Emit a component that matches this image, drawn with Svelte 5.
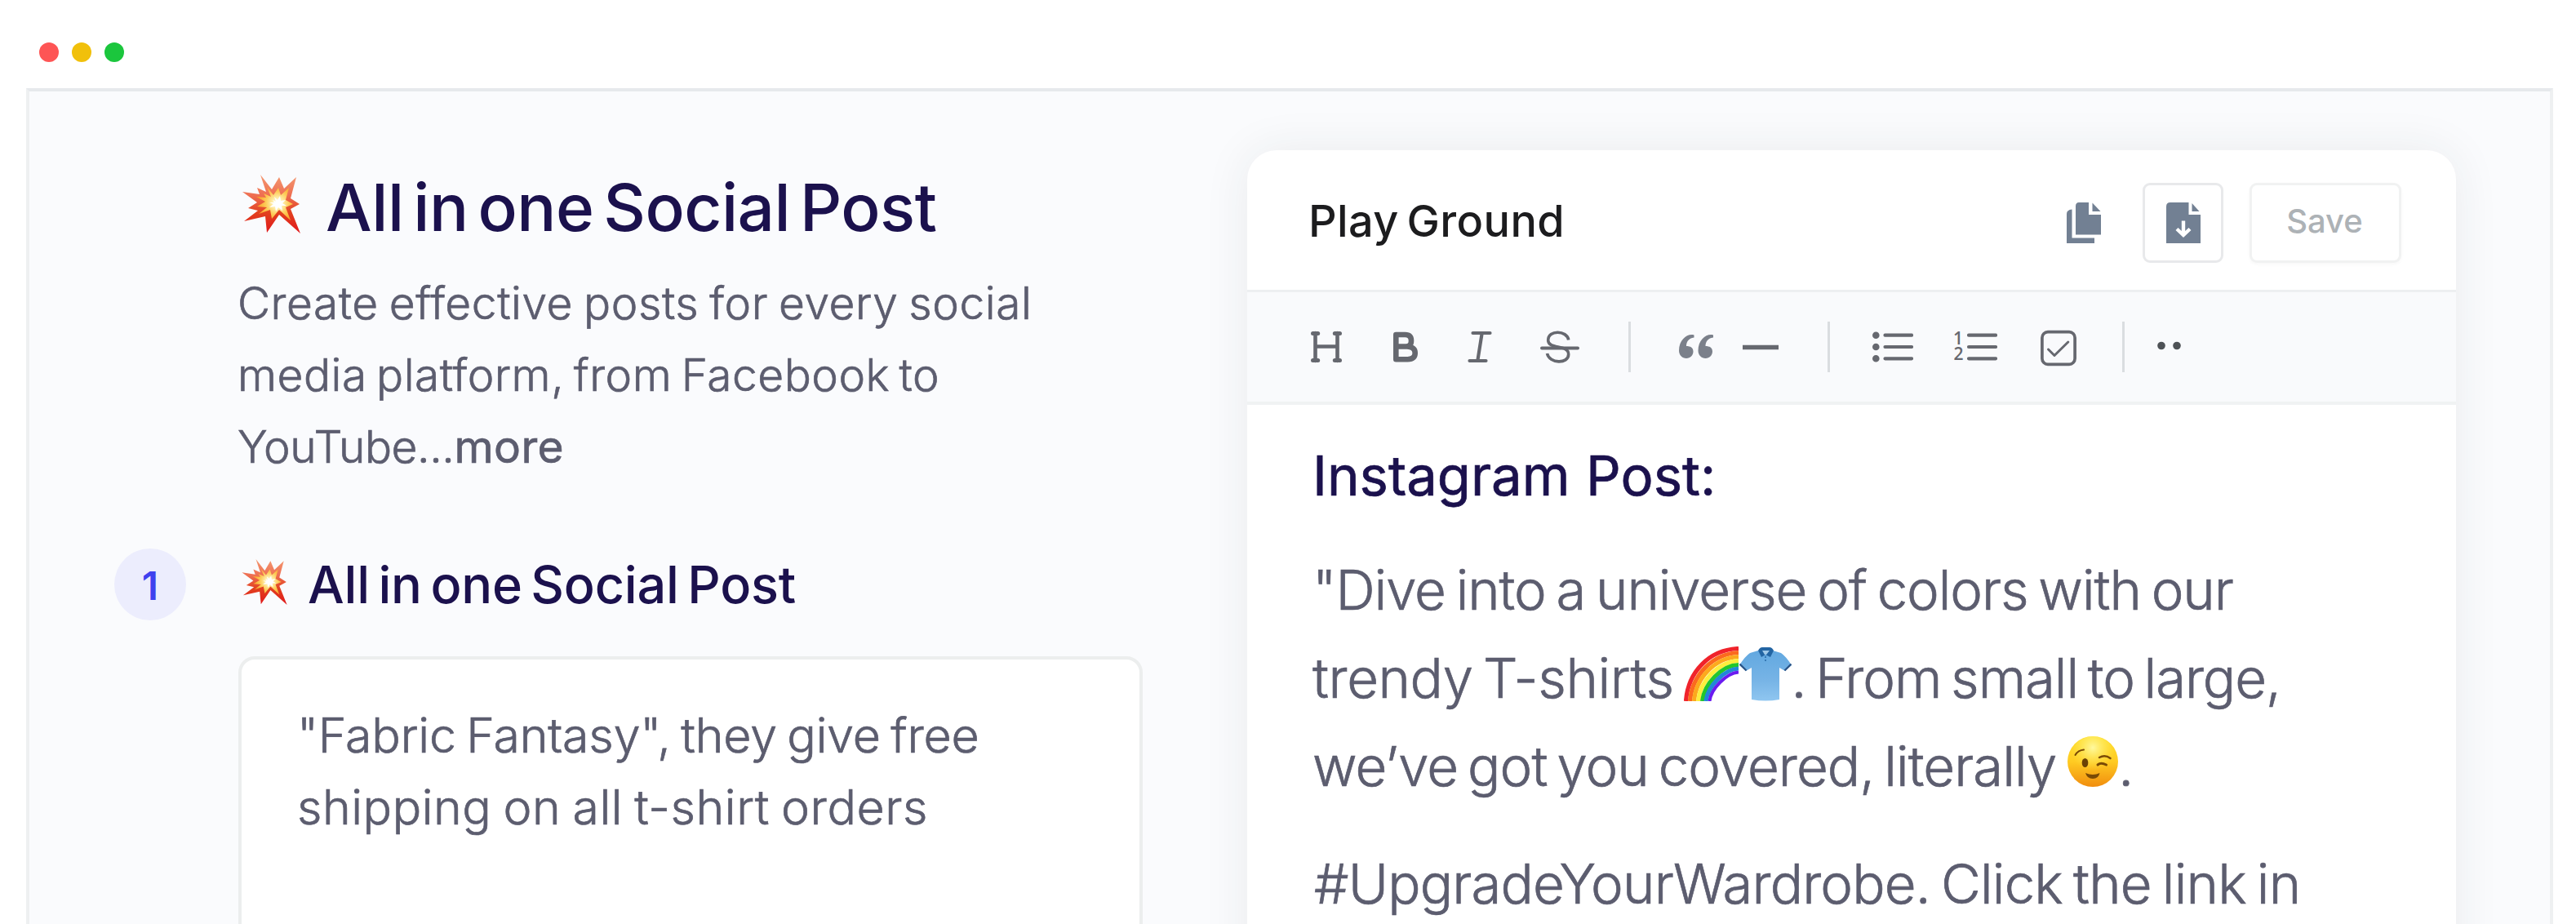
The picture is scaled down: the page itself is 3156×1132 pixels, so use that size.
<script lang="ts">
	// ls and ws are letter and word spacing in px
	type Line = { text: string; ls: number; ws: number };

	const summary: Line[] = [
		{ text: 'Create effective posts for every social', ls: 0.57, ws: -3 },
		{ text: 'media platform, from Facebook to', ls: 0.52, ws: -4.5 },
		{ text: 'YouTube...', ls: -0.4, ws: 0 }
	];

	const prompt: Line[] = [
		{ text: '"Fabric Fantasy", they give free', ls: -0.15, ws: -4 },
		{ text: 'shipping on all t-shirt orders', ls: 0.55, ws: -3 }
	];

	// gap is the space before the tool, w its drawn width
	const tools = [
		{ name: 'heading', w: 38, gap: 0 },
		{ name: 'bold', w: 30, gap: 63 },
		{ name: 'italic', w: 30, gap: 61 },
		{ name: 'strike', w: 48, gap: 59 },
		{ name: 'divider', w: 3, gap: 60 },
		{ name: 'quote', w: 42, gap: 59 },
		{ name: 'rule', w: 44, gap: 36 },
		{ name: 'divider', w: 3, gap: 60 },
		{ name: 'bullets', w: 50, gap: 52 },
		{ name: 'numbers', w: 53, gap: 50 },
		{ name: 'check', w: 44, gap: 53 },
		{ name: 'divider', w: 3, gap: 56 },
		{ name: 'more', w: 30, gap: 40 }
	];
</script>

{#snippet boom()}
	<svg class="boom" viewBox="0 0 71 72">
		<defs>
			<linearGradient id="boom-red" x1="0" y1="0" x2="0" y2="1">
				<stop offset="0" stop-color="#f49a72" />
				<stop offset="0.35" stop-color="#ee6f52" />
				<stop offset="0.65" stop-color="#e2401f" />
				<stop offset="1" stop-color="#e0161b" />
			</linearGradient>
			<radialGradient id="boom-glow" cx="43" cy="35" r="24" gradientUnits="userSpaceOnUse">
				<stop offset="0" stop-color="#fff" />
				<stop offset="0.25" stop-color="#fff0b0" />
				<stop offset="0.6" stop-color="#fdcb58" />
				<stop offset="1" stop-color="#f9a52c" />
			</radialGradient>
		</defs>
		<path
			fill="url(#boom-red)"
			d="M22 0 36 18 45 3 51 17 66 3 59 29 70 36 59 42 71 72 45 49 30 71 28 51 2 57 19 44 7 41 18 34 0 21 21 24 18 16 29 21Z"
		/>
		<path
			fill="url(#boom-glow)"
			d="M30 15 38 25 44 16 47 25 57 16 53 31 62 36 53 40 59 56 45 43 36 54 34 43 20 48 30 40 18 39 28 33 17 27 29 28 26 23 35 27Z"
		/>
		<path
			fill="#fff"
			d="M39 27 43 31 46 26 47 32 53 31 49 35 54 38 48 38 49 44 44 40 41 45 40 39 33 40 38 36 33 34 39 34 37 31 41 33Z"
		/>
	</svg>
{/snippet}

{#snippet row(line: Line)}
	<span class="line" style="letter-spacing: {line.ls}px; word-spacing: {line.ws}px">{line.text}</span>
{/snippet}

<div class="window">
	<div class="titlebar">
		<span class="dot red"></span>
		<span class="dot amber"></span>
		<span class="dot green"></span>
	</div>

	<main class="panel">
		<section class="form">
			<header class="intro">
				<h1>{@render boom()}<span>All in one Social Post</span></h1>
				<div class="summary">
					{#each summary as line}
						{@render row(line)}
					{/each}
					<b>more</b>
				</div>
			</header>

			<div class="step">
				<span class="badge">1</span>
				<h2>{@render boom()}<span>All in one Social Post</span></h2>
			</div>

			<div class="prompt">
				{#each prompt as line}
					{@render row(line)}
				{/each}
			</div>
		</section>

		<section class="card">
			<header class="card-head">
				<h3>Play Ground</h3>
				<svg class="copy" viewBox="0 0 42 50" fill="#728093">
					<path d="M15 0H27V15H42V39.500H11V4.500Q11 0 15 0Z" />
					<path d="M31.500 0.500 41.500 11H31.500Z" />
					<path d="M6.500 8.500V43.500H34V50H0V14Q0 9 6.500 8.500Z" />
				</svg>
				<button class="download" aria-label="Download">
					<svg viewBox="0 0 42 50">
						<path fill="#728093" d="M5 0H27.500V15H42V50H0V5Q0 0 5 0Z" />
						<path fill="#728093" d="M31.500 1 40.500 11H31.500Z" />
						<path
							fill="none"
							stroke="#fff"
							stroke-width="4.400"
							d="M21 22.500V39M13 32.500 21 40 29 32.500"
						/>
					</svg>
				</button>
				<button class="save">Save</button>
			</header>

			<div class="toolbar">
				{#each tools as tool}
					<span class="tool" style="width: {tool.w}px; margin-left: {tool.gap}px">
						{#if tool.name === 'divider'}
							<i class="divider"></i>
						{:else}
							<svg width={tool.w} height="50" viewBox="0 0 {tool.w} 50">
								{#if tool.name === 'heading'}
									<path d="M5.500 8V42M32.500 8V42M5.500 24.500H32.500" stroke-width="4.600" />
									<path d="M2.500 8.500H8.700M29.300 8.500H35.500M2.500 41.500H8.700M29.300 41.500H35.500" stroke-width="5" />
								{:else if tool.name === 'bold'}
									<path
										d="M3.300 10H14.500Q22 10 22 17.500T14.500 24.500H3.300M14.500 24.500H17Q26.700 25 26.700 32.500T17.500 40.200H3.300V10"
										stroke-width="6.600"
									/>
								{:else if tool.name === 'italic'}
									<path d="M6.500 8H27.500M2.500 42H22.500M17.700 8 12.300 42" stroke-width="4.200" />
								{:else if tool.name === 'strike'}
									<path d="M2 26.500H46" stroke-width="4" />
									<path
										stroke-linecap="butt"
										d="M34.700 16.500C33 4.500 9.500 3.500 9.700 17C9.800 28.500 34.700 21.500 34.700 34C34.700 46.500 11 45.500 8.500 33"
										stroke-width="3.600"
									/>
								{:else if tool.name === 'quote'}
									<path
										class="solid"
										d="M18.500 10.500C11 8 0 15.500 0 29.500C0 35 4 39 9 39S17.500 35 17.500 30.500S14 24 9 24C9 19 11.500 14.500 18.500 13.500Z"
									/>
									<path
										class="solid"
										d="M42 10.500C34.500 8 23.500 15.500 23.500 29.500C23.500 35 27.500 39 32.500 39S41 35 41 30.500S37.500 24 32.500 24C32.500 19 35 14.500 42 13.500Z"
									/>
								{:else if tool.name === 'rule'}
									<path d="M0 25.500H44" stroke-width="5.500" stroke-linecap="butt" />
								{:else if tool.name === 'bullets'}
									<path d="M15.500 10.700H48M15.500 25H48M15.500 39.300H48" stroke-width="4.200" />
									<path d="M4.300 10.700H4.310M4.300 25H4.310M4.300 39.300H4.310" stroke-width="8.600" />
								{:else if tool.name === 'numbers'}
									<path d="M18 10.700H51M18 25H51M18 39.300H51" stroke-width="4.200" />
									<text x="-1" y="22">1</text>
									<text x="-0.5" y="40.500">2</text>
								{:else if tool.name === 'check'}
									<rect x="1.900" y="6.700" width="40.200" height="39.600" rx="7" stroke-width="3.700" />
									<path d="M9.500 28 17 35.500 33.800 19" stroke-width="3" />
								{:else}
									<circle cx="5" cy="23.500" r="4.800" />
									<circle cx="24" cy="23.500" r="4.800" />
								{/if}
							</svg>
						{/if}
					</span>
				{/each}
			</div>

			<article class="post">
				<h4>Instagram&nbsp; Post:</h4>
				<p>
					<span class="line l1">"Dive into a universe of colors with our</span>
					<span class="line l2">
						<span class="lead">trendy T-shirts</span>
						<svg class="rainbow" viewBox="0 0 67 67" fill="none" stroke-width="5.200">
							<path stroke="#f0232b" d="M2.500 67C5 31 31 4 67 2.500" />
							<path stroke="#fb6a1e" d="M7.500 67C10 35 35 9 67 7.500" />
							<path stroke="#fca91d" d="M12.500 67C15 38 38 14 67 12.500" />
							<path stroke="#fdee3e" d="M17.500 67C20 42 42 19 67 17.500" />
							<path stroke="#23c62b" d="M22.500 67C25 46 46 23 67 22.500" />
							<path stroke="#2187d8" d="M27 67C29 49 49 28 67 27" />
							<path stroke="#6a1bf0" stroke-width="4" d="M31.500 67C33 52 52 32.500 67 31.500" />
						</svg>
						<svg class="shirt" viewBox="0 0 64 66">
							<defs>
								<linearGradient id="cloth" x1="0" y1="0" x2="0" y2="1">
									<stop offset="0" stop-color="#62a8e0" />
									<stop offset="0.6" stop-color="#77b4e6" />
									<stop offset="1" stop-color="#8fc6f0" />
								</linearGradient>
							</defs>
							<path
								fill="url(#cloth)"
								d="M23 4Q32 9 41 4L51 7Q57 11 64 22L56 29 49 25V64Q32 67 15 64V25L8 29 0 22Q7 11 13 7Z"
							/>
							<path fill="none" stroke="#2a5285" stroke-width="2.200" d="M0.500 20.500 8.500 28.500M63.500 20.500 55.500 28.500" />
							<path fill="#2365a3" d="M23 4Q25 0 28 0H37Q40 0 42 4L38 12 32 9 27 12Z" />
							<path fill="#9fc8e8" d="M28 4H37L33 9H31Z" />
							<path stroke="#2365a3" stroke-width="1.400" d="M32 11V13M32 15V17" />
						</svg>
						<span class="rest">. From small to large,</span>
					</span>
					<span class="line l3">
						<span>we’ve got you covered, literally</span>
						<svg class="wink" viewBox="0 0 62 62">
							<defs>
								<linearGradient id="face" x1="0" y1="0" x2="0" y2="1">
									<stop offset="0" stop-color="#ffdf2e" />
									<stop offset="0.5" stop-color="#ffcb22" />
									<stop offset="1" stop-color="#f18d0e" />
								</linearGradient>
								<radialGradient id="shine" cx="0.5" cy="0.25" r="0.5">
									<stop offset="0" stop-color="#fff9a0" />
									<stop offset="1" stop-color="#ffe94a" stop-opacity="0" />
								</radialGradient>
							</defs>
							<circle cx="31" cy="31" r="31" fill="url(#face)" />
							<circle cx="31" cy="28" r="28" fill="url(#shine)" />
							<ellipse cx="21.500" cy="32.500" rx="3.800" ry="5.600" fill="#6b4105" />
							<g fill="none" stroke="#7a4a06" stroke-linecap="round">
								<path stroke-width="2" d="M9.500 23Q13 17 20 16.500" />
								<path stroke-width="2.500" d="M39 26Q46 22 52.500 27" />
								<path stroke-width="3" d="M37 35Q41 31.500 47.500 35" />
							</g>
							<path fill="#7a4a06" d="M22 45Q31 49 39.500 45Q38 52 31 52T22 45Z" />
						</svg>
						<span class="rest">.</span>
					</span>
				</p>
				<p>
					<span class="line l4">#UpgradeYourWardrobe. Click the link in</span>
				</p>
			</article>
		</section>
	</main>
</div>

<style>
	:global(body) {
		margin: 0;
		background: #fff;
	}
	.window {
		height: 1132px;
		overflow: hidden;
		background: #fff;
		font-family: Inter, 'Liberation Sans', sans-serif;
		font-weight: 300;
		color: #5c5d6f;
	}
	.titlebar {
		display: flex;
		gap: 16px;
		height: 56px;
		padding: 52px 48px 0;
	}
	.dot {
		width: 24px;
		height: 24px;
		border-radius: 50%;
	}
	.red {
		background: #fe5555;
	}
	.amber {
		background: #f1c00b;
	}
	.green {
		background: #1bc63d;
	}
	.panel {
		display: flex;
		align-items: flex-start;
		box-sizing: border-box;
		width: 3096px;
		height: 1100px;
		margin-left: 32px;
		border: 4px solid #eef0f1;
		border-top-color: #e6e9ec;
		background: #fafbfd;
	}
	h1,
	h2,
	h3,
	h4,
	p {
		margin: 0;
	}
	.line {
		display: block;
		white-space: nowrap;
	}
	/* thickens the light cut a little */
	.summary,
	.prompt,
	.post {
		-webkit-text-stroke: 0.7px currentColor;
	}
	.form {
		width: 1264px;
		padding: 94px 0 0 104px;
	}
	.intro {
		margin-left: 151px;
	}
	h1,
	h2 {
		display: flex;
		color: #1b114d;
		white-space: nowrap;
	}
	h1 {
		padding-left: 6px;
		font-size: 80px;
		font-weight: 500;
		line-height: 96px;
		letter-spacing: -0.5px;
		word-spacing: -9px;
	}
	h1 .boom {
		width: 71px;
		height: 72px;
		margin: 8px 31px 0 0;
	}
	.boom {
		flex: none;
	}
	.summary {
		display: flex;
		flex-wrap: wrap;
		width: 1020px;
		margin-top: 25px;
		font-size: 55px;
		line-height: 88px;
	}
	.summary b {
		font-weight: 400;
		letter-spacing: 0.4px;
	}
	.step {
		display: flex;
		align-items: center;
		height: 88px;
		margin-top: 81px;
	}
	.badge {
		width: 88px;
		height: 88px;
		border-radius: 50%;
		background: #ecedfd;
		color: #3f41ee;
		font-size: 48px;
		font-weight: 600;
		line-height: 92px;
		text-align: center;
	}
	h2 {
		margin-left: 68px;
		font-size: 63px;
		font-weight: 500;
		line-height: 88px;
		letter-spacing: -0.2px;
		word-spacing: -6px;
	}
	h2 .boom {
		width: 56px;
		height: 56px;
		margin: 13px 25px 0 0;
	}
	.prompt {
		box-sizing: border-box;
		width: 1108px;
		height: 400px;
		margin: 44px 0 0 152px;
		padding: 49px 68px;
		border: 4px solid #eceeee;
		border-radius: 20px;
		background: #fff;
		font-size: 59px;
		line-height: 88px;
	}
	.card {
		width: 1481px;
		height: 1100px;
		margin: 72px 0 0 124px;
		border-radius: 36px;
		background: #fff;
		box-shadow: 0 0 56px rgba(40, 50, 50, 0.08);
	}
	.card-head {
		display: flex;
		align-items: center;
		height: 165px;
		padding: 6px 67px 0 75px;
		border-bottom: 3px solid #edeff1;
	}
	h3 {
		margin: -4px auto 0 0;
		color: #1c1c1e;
		font-size: 54px;
		font-weight: 500;
		line-height: 64px;
		letter-spacing: 0.4px;
		word-spacing: -5px;
	}
	.copy {
		width: 42px;
		height: 50px;
	}
	button {
		display: flex;
		align-items: center;
		justify-content: center;
		box-sizing: border-box;
		height: 98px;
		padding: 0;
		border: 3px solid #e8e9eb;
		border-radius: 9px;
		background: #fff;
		font-family: inherit;
	}
	.download {
		width: 99px;
		margin: 0 32px 0 51px;
	}
	.download svg {
		width: 42px;
		height: 50px;
	}
	.save {
		width: 186px;
		padding: 0 2px 4px 0;
		border-color: #f1f2f2;
		color: #adb2b6;
		font-size: 40px;
		font-weight: 500;
		box-shadow: 0 2px 4px rgba(0, 0, 0, 0.03);
	}
	.toolbar {
		display: flex;
		align-items: center;
		height: 134px;
		padding-left: 78px;
		border-bottom: 4px solid #f0f2f3;
		background: #f9fafc;
	}
	.tool {
		display: flex;
	}
	.tool svg {
		display: block;
		fill: none;
		stroke: #66686f;
		stroke-linecap: round;
		stroke-linejoin: round;
	}
	.tool .solid {
		fill: #7b808a;
		stroke: none;
	}
	.tool text {
		fill: #66686f;
		stroke: none;
		font: 600 21px 'Open Sans', sans-serif;
	}
	.tool circle {
		fill: #4e5256;
		stroke: none;
	}
	.divider {
		width: 3px;
		height: 62px;
		background: #dadde0;
	}
	.post {
		padding: 33px 0 0 80px;
		font-size: 67px;
		line-height: 108px;
	}
	h4 {
		margin-bottom: 32px;
		color: #1b114d;
		font-size: 67px;
		font-weight: 400;
		word-spacing: -9px;
	}
	.post p + p {
		margin-top: 36px;
	}
	.l1 {
		letter-spacing: -1.05px;
		word-spacing: -5px;
	}
	.l2,
	.l3 {
		display: flex;
	}
	.l2 {
		letter-spacing: -1.05px;
		word-spacing: -6px;
	}
	.lead {
		letter-spacing: -0.4px;
	}
	.l3 {
		letter-spacing: -0.9px;
		word-spacing: -6px;
	}
	.l4 {
		padding-left: 2px;
		letter-spacing: -0.8px;
		word-spacing: -5px;
	}
	.rainbow {
		width: 67px;
		height: 67px;
		margin: 15px 1px 0 12px;
	}
	.shirt {
		width: 64px;
		height: 66px;
		margin-top: 16px;
	}
	.wink {
		width: 62px;
		height: 62px;
		margin: 17px 0 0 14px;
	}
</style>
